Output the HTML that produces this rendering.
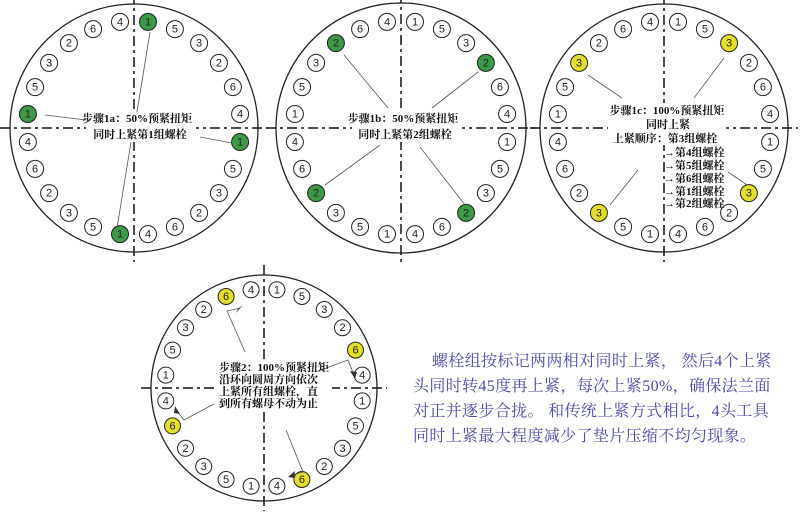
<!DOCTYPE html>
<html><head><meta charset="utf-8">
<style>
html,body{margin:0;padding:0;background:#fff;}
body{width:802px;height:515px;overflow:hidden;position:relative;}
svg{position:absolute;left:0;top:0;}
.t{font-family:"Liberation Serif","Noto Serif CJK SC",serif;font-weight:bold;font-size:11px;fill:#111;}
.n{font-family:"Liberation Sans",sans-serif;font-size:11px;fill:#222;text-anchor:middle;dominant-baseline:central;}
#para{position:absolute;left:413px;top:349px;font-family:"Liberation Serif","Noto Serif CJK SC",serif;font-size:16px;line-height:25px;color:#4a4aa8;white-space:nowrap;letter-spacing:0.35px;}
</style></head><body>
<svg id="s" width="802" height="515" xmlns="http://www.w3.org/2000/svg"></svg>
<div id="para"><span style="padding-left:19px">螺栓组按标记两两相对同时上紧， 然后4个上紧</span><br>头同时转45度再上紧，每次上紧50%，确保法兰面<br>对正并逐步合拢。 和传统上紧方式相比，4头工具<br>同时上紧最大程度减少了垫片压缩不均匀现象。</div>
<script>
var s=document.getElementById('s');var h='';
var seq=[1,5,3,2,6,4];
function circ(cx,cy,R,br,bs,hl,col){
  h+='<circle cx="'+cx+'" cy="'+cy+'" r="'+R+'" fill="none" stroke="#222" stroke-width="1.3"/>';
  var e=R+10;
  h+='<line x1="'+(cx-e)+'" y1="'+cy+'" x2="'+(cx+e)+'" y2="'+cy+'" stroke="#111" stroke-width="1.5" stroke-dasharray="10,4,3,4"/>';
  h+='<line x1="'+cx+'" y1="'+(cy-e)+'" x2="'+cx+'" y2="'+(cy+e)+'" stroke="#111" stroke-width="1.5" stroke-dasharray="10,4,3,4"/>';
  for(var k=0;k<24;k++){
    var a=(7.5+15*k)*Math.PI/180;
    var x=cx+br*Math.sin(a),y=cy-br*Math.cos(a);var v=seq[k%6];
    var f=v==hl?col:'#fff';
    h+='<circle cx="'+x.toFixed(1)+'" cy="'+y.toFixed(1)+'" r="'+bs+'" fill="'+f+'" stroke="#222" stroke-width="1"/>';
    h+='<text class="n" x="'+x.toFixed(1)+'" y="'+(y+0.5).toFixed(1)+'">'+v+'</text>';
  }
}
function ln(a,b,c,d){h+='<line x1="'+a+'" y1="'+b+'" x2="'+c+'" y2="'+d+'" stroke="#555" stroke-width="0.8"/>';}
function wr(x,y,w,hh){h+='<rect x="'+x+'" y="'+y+'" width="'+w+'" height="'+hh+'" fill="#fff"/>';}
function tx(x,y,t,anc){h+='<text class="t" x="'+x+'" y="'+y+'" text-anchor="'+(anc||'middle')+'">'+t+'</text>';}
var G='#3a9a48',Y='#e4de2c';
circ(134,128,124,107,8.5,1,G);
circ(401,128,125,107,8.5,2,G);
circ(664,128,124,107,8.5,3,Y);
circ(264,388,113,99,8,6,Y);
// C1
wr(86,111,110,31);
ln(150,32,137,112);ln(45,115,86,120);ln(200,137,232,143);ln(131,142,117,228);
tx(137,122,'步骤1a：50%预紧扭矩');tx(140,138,'同时上紧第1组螺栓');
// C2
wr(352,111,110,31);
ln(344,55,388,108);ln(478,72,432,108);ln(380,145,325,185);ln(420,147,465,205);
tx(403,122,'步骤1b：50%预紧扭矩');tx(405,138,'同时上紧第2组螺栓');
// C3
wr(608,103,118,42);
ln(588,75,622,98);ln(724,58,694,98);ln(638,170,610,205);ln(728,172,747,185);
tx(667,114,'步骤1c：100%预紧扭矩');tx(668,128,'同时上紧');tx(665,142,'上紧顺序：第3组螺栓');
var ys=[156,169,182,195,207],g=['4','5','6','1','2'];
for(var i=0;i<5;i++){tx(664,ys[i],'→第'+g[i]+'组螺栓','start');}
// C4
wr(214,361,118,50);
h+='<polyline points="245,352 227,311 240,308" fill="none" stroke="#555" stroke-width="0.8"/><polygon points="243,305 236,313 238,309" fill="#333"/>';
h+='<polyline points="318,371 348,360 354,375" fill="none" stroke="#555" stroke-width="0.8"/><polygon points="355,379 350,371 357,372" fill="#333"/>';
h+='<polyline points="214,404 184,420 176,410" fill="none" stroke="#555" stroke-width="0.8"/><polygon points="175,406 180,414 174,413" fill="#333"/>';
h+='<polyline points="286,430 303,472 292,475" fill="none" stroke="#555" stroke-width="0.8"/><polygon points="288,477 295,471 294,478" fill="#333"/>';
tx(219,371,'步骤2：100%预紧扭矩','start');tx(219,383,'沿环向圆周方向依次','start');tx(219,395,'上紧所有组螺栓，直','start');tx(219,407,'到所有螺母不动为止','start');
s.innerHTML=h;
</script>
</body></html>
